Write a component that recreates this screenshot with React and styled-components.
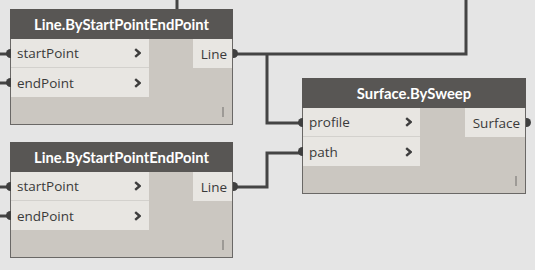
import React from "react";
import styled, { createGlobalStyle } from "styled-components";

const Global = createGlobalStyle`
  html, body { margin: 0; padding: 0; background: #e5e5e5; }
  body { font-family: "Open Sans", "Liberation Sans", sans-serif; }
`;

const Canvas = styled.div`
  position: relative;
  width: 535px;
  height: 270px;
  overflow: hidden;
  background: #e5e5e5;
`;

const Wires = styled.svg`
  position: absolute;
  left: 0;
  top: 0;
  width: 535px;
  height: 270px;
`;

const Node = styled.div`
  position: absolute;
  left: ${(p) => p.$x}px;
  top: ${(p) => p.$y}px;
  width: ${(p) => p.$w}px;
  height: 116px;
  display: flex;
  flex-direction: column;
  background: #cbc7c1;
  box-sizing: border-box;
  border: 1px solid #6a6866;
  border-top: none;
`;

const Header = styled.div`
  height: 30px;
  margin: 0 -1px;
  background: #585654;
  color: #ffffff;
  font-family: "Lato", "Open Sans", sans-serif;
  font-weight: 700;
  font-size: 14.8px;
  display: flex;
  align-items: center;
  justify-content: center;
`;

const Body = styled.div`
  flex: 1;
  display: flex;
  justify-content: space-between;
  position: relative;
`;

const Inputs = styled.div`
  width: ${(p) => p.$w}px;
  display: flex;
  flex-direction: column;
`;

const InPort = styled.div`
  position: relative;
  height: 29px;
  box-sizing: border-box;
  background: #e8e6e2;
  border-bottom: 1px solid #d3d1cd;
  display: flex;
  align-items: center;
  justify-content: space-between;
  padding: 0 8px 0 6px;
  color: #3a3a3a;
  font-family: "Open Sans", sans-serif;
  font-size: 13.5px;
  &:last-child { border-bottom: none; }
  &::before {
    content: "";
    position: absolute;
    left: -5px;
    top: 50%;
    width: 5px;
    height: 9px;
    margin-top: -4.5px;
    background: #3f3f3f;
    border-radius: 5px 0 0 5px;
  }
`;

const Outputs = styled.div`
  display: flex;
  flex-direction: column;
  align-items: flex-end;
`;

const OutPort = styled.div`
  position: relative;
  height: 29px;
  width: ${(p) => p.$w}px;
  box-sizing: border-box;
  background: #e8e6e2;
  display: flex;
  align-items: center;
  justify-content: flex-end;
  padding-right: 5px;
  color: #3a3a3a;
  font-family: "Open Sans", sans-serif;
  font-size: 13.5px;
  &::after {
    content: "";
    position: absolute;
    right: -6px;
    top: 50%;
    width: 5px;
    height: 9px;
    margin-top: -4.5px;
    background: #3f3f3f;
    border-radius: 0 5px 5px 0;
  }
`;

const Grip = styled.div`
  position: absolute;
  right: 8px;
  bottom: 7px;
  width: 2px;
  height: 10px;
  background: #9d9a96;
`;

const Chevron = () => (
  <svg width="7" height="10" viewBox="0 0 7 10">
    <path d="M1.2 1.2 L5.6 5 L1.2 8.8" fill="none" stroke="#3d3d3d" strokeWidth="2.4" />
  </svg>
);

function DNode({ x, y, w, title, inputs, inW, output, outW }) {
  return (
    <Node $x={x} $y={y} $w={w}>
      <Header>{title}</Header>
      <Body>
        <Inputs $w={inW}>
          {inputs.map((n) => (
            <InPort key={n}>
              <span>{n}</span>
              <Chevron />
            </InPort>
          ))}
        </Inputs>
        <Outputs>
          <OutPort $w={outW}>{output}</OutPort>
        </Outputs>
        <Grip />
      </Body>
    </Node>
  );
}

export default function App() {
  return (
    <>
      <Global />
      <Canvas>
        <Wires viewBox="0 0 535 270">
          <g fill="none" stroke="#444444" strokeWidth="3">
            <path d="M177 0 V12" />
            <path d="M233 54 H466 V0" />
            <path d="M267 54 V123 H302" />
            <path d="M233 187 H267 V153 H302" />
            <path d="M0 54 H10" />
            <path d="M0 83 H10" />
            <path d="M0 187 H10" />
            <path d="M0 216 H10" />
          </g>
        </Wires>
        <DNode
          x={10}
          y={9}
          w={223}
          title="Line.ByStartPointEndPoint"
          inputs={["startPoint", "endPoint"]}
          inW={138}
          output="Line"
          outW={39}
        />
        <DNode
          x={10}
          y={142}
          w={223}
          title="Line.ByStartPointEndPoint"
          inputs={["startPoint", "endPoint"]}
          inW={138}
          output="Line"
          outW={39}
        />
        <DNode
          x={302}
          y={78}
          w={224}
          title="Surface.BySweep"
          inputs={["profile", "path"]}
          inW={117}
          output="Surface"
          outW={60}
        />
      </Canvas>
    </>
  );
}
